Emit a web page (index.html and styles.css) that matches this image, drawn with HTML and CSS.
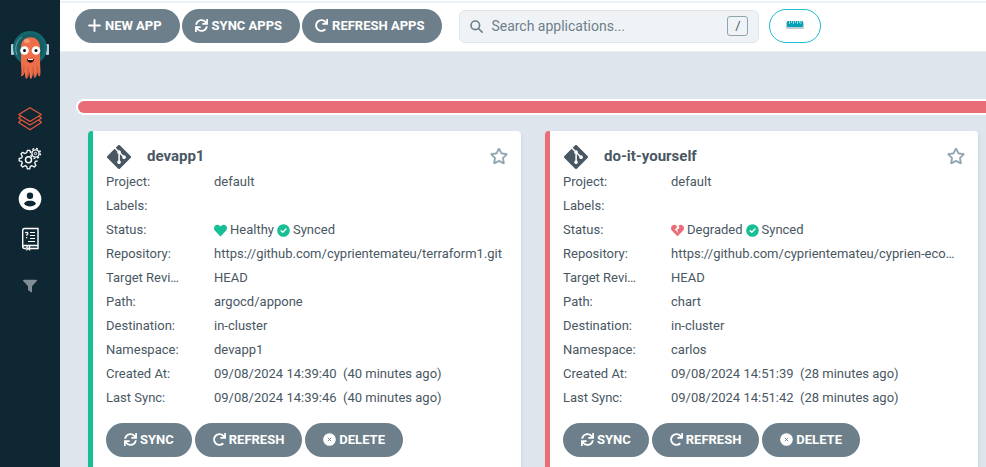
FILE: index.html
```html
<!DOCTYPE html>
<html lang="en">
<head>
<meta charset="utf-8">
<meta name="viewport" content="width=device-width, initial-scale=1">
<title>Applications</title>
<link rel="stylesheet" href="styles.css">
</head>
<body>
<svg class="sprite" aria-hidden="true">
  <symbol id="plus" viewBox="0 0 12 12"><path d="M6 1v10M1 6h10" fill="none" stroke="currentColor" stroke-width="1.8" stroke-linecap="round"/></symbol>
  <symbol id="sync" viewBox="0 0 512 512"><path d="M440.65 12.57l4 82.77A247.16 247.16 0 0 0 255.83 8C134.73 8 33.91 94.92 12.29 209.82A12 12 0 0 0 24.09 224h49.05a12 12 0 0 0 11.67-9.26 175.91 175.91 0 0 1 317-56.94l-101.46-4.86a12 12 0 0 0-12.57 12v47.41a12 12 0 0 0 12 12H500a12 12 0 0 0 12-12V12a12 12 0 0 0-12-12h-47.37a12 12 0 0 0-11.98 12.57zM255.83 432a175.61 175.61 0 0 1-146-77.8l101.8 4.87a12 12 0 0 0 12.57-12v-47.4a12 12 0 0 0-12-12H12a12 12 0 0 0-12 12V500a12 12 0 0 0 12 12h47.35a12 12 0 0 0 12-12.6l-4.15-82.57A247.17 247.17 0 0 0 255.83 504c121.11 0 221.93-86.92 243.55-201.82a12 12 0 0 0-11.8-14.18h-49.05a12 12 0 0 0-11.67 9.26A175.86 175.86 0 0 1 255.83 432z"/></symbol>
  <symbol id="redo" viewBox="0 0 512 512"><path d="M500.33 0h-47.41a12 12 0 0 0-12 12.57l4 82.76A247.42 247.42 0 0 0 256 8C119.34 8 7.9 119.53 8 256.19 8.1 393.07 119.1 504 256 504a247.1 247.1 0 0 0 166.18-63.91 12 12 0 0 0 .48-17.43l-34-34a12 12 0 0 0-16.38-.55A176 176 0 1 1 402.1 157.8l-101.53-4.87a12 12 0 0 0-12.57 12v47.41a12 12 0 0 0 12 12h200.33a12 12 0 0 0 12-12V12a12 12 0 0 0-12-12z"/></symbol>
  <symbol id="times" viewBox="0 0 14 14"><circle cx="7" cy="7" r="6.8"/><path d="M5.2 5.2l3.6 3.6M8.8 5.2L5.2 8.8" fill="none" stroke="#6d7f8b" stroke-width="1"/></symbol>
  <symbol id="check" viewBox="0 0 14 14"><circle cx="7" cy="7" r="6.8"/><path d="M4.4 7.2l1.8 1.8 3.5-3.6" fill="none" stroke="#fff" stroke-width="1.5" stroke-linecap="round" stroke-linejoin="round"/></symbol>
  <symbol id="heart" viewBox="0 0 512 512"><path d="M462.3 62.6C407.5 15.9 326 24.3 275.7 76.2L256 96.5l-19.7-20.3C186.1 24.3 104.5 15.9 49.7 62.6c-62.8 53.6-66.1 149.8-9.9 207.9l193.5 199.8c12.5 12.9 32.8 12.9 45.3 0l193.5-199.8c56.3-58.1 53-154.3-9.8-207.9z"/></symbol>
  <symbol id="broken" viewBox="0 0 512 512"><path d="M473.7 73.8l-2.4-2.5c-46-47-118-51.7-169.6-14.8L336 159.9l-96 64 48 128-144-144 96-64-28.6-86.5C159.7 19.6 87 24 40.7 71.4l-2.4 2.4C-10.4 123.6-12.5 202.9 31 256l212.1 218.6c7.1 7.3 18.6 7.3 25.7 0L481 255.9c43.5-53 41.4-132.3-7.3-182.1z"/></symbol>
  <symbol id="git" viewBox="0 32 448 448"><path d="M439.55 236.05L244 40.45a28.87 28.87 0 0 0-40.81 0l-40.66 40.63 51.52 51.52c27.06-9.14 52.68 16.77 43.39 43.68l49.66 49.66c34.23-11.8 61.18 31 35.47 56.69-26.49 26.49-70.21-2.87-56-37.34L240.22 199v121.85c25.3 12.54 22.26 41.85 9.08 55a34.34 34.34 0 0 1-48.55 0c-17.57-17.6-11.07-46.91 11.25-56v-123c-20.8-8.51-24.6-30.74-18.64-45L142.57 101 8.45 235.14a28.86 28.86 0 0 0 0 40.81l195.61 195.6a28.86 28.86 0 0 0 40.8 0l194.69-194.69a28.86 28.86 0 0 0 0-40.81z"/></symbol>
  <symbol id="star" viewBox="0 0 576 512"><path stroke="currentColor" stroke-width="12" d="M528.1 171.5L382 150.2 316.7 17.8c-11.7-23.6-45.6-23.9-57.4 0L194 150.2 47.9 171.5c-26.2 3.8-36.7 36.1-17.7 54.6l105.7 103-25 145.5c-4.5 26.3 23.2 46 46.4 33.7L288 439.6l130.7 68.7c23.2 12.2 50.9-7.4 46.4-33.7l-25-145.5 105.7-103c19-18.5 8.5-50.8-17.7-54.6zM388.6 312.3l23.7 138.4L288 385.4l-124.3 65.3 23.7-138.4-100.6-98 139-20.2 62.2-126 62.2 126 139 20.2-100.6 98z"/></symbol>
</svg>
<div class="layout">
  <nav class="sidebar" aria-label="Main">
    <a class="logo" href="#" aria-label="Home">
      <svg viewBox="0 0 38 50" width="38" height="50">
        <rect x="0" y="14" width="3" height="11" rx="1" fill="#b9cfdf"/><rect x="35" y="14" width="3" height="11" rx="1" fill="#b9cfdf"/>
        <circle cx="19" cy="18" r="17" fill="#12686f"/><circle cx="19" cy="18" r="14" fill="#175c63"/>
        <path d="M6 25C3 17 6 10 11 7" fill="none" stroke="#67a5a5" stroke-width="1"/>
        <path d="M10 17c0-13 19-13 19 0v14c0 6 1 11 0 15-2 1-2-2-3-4 0 3-1 5-2 6-2-1-1-4-2-6 0 3-1 6-2 7-2-1-1-5-2-7 0 3-1 6-3 7-1-2-1-5-1-7-1 2-2 5-4 4 1-4 0-9 0-13z" fill="#ee6e49"/>
        <path d="M13 36c0 5-1 8-3 9M17 37c0 5 0 8-1 11M22 37c0 5 1 8 2 10M26 36c0 4 1 7 3 9" stroke="#b9523c" stroke-width=".8" fill="none"/>
        <ellipse cx="16" cy="11" rx="3" ry="2" fill="#f69a78"/>
        <circle cx="13.500" cy="20.500" r="4.300" fill="#fff"/><circle cx="25" cy="20.500" r="4.300" fill="#fff"/>
        <circle cx="13.500" cy="20.500" r="1.500" fill="#111"/><circle cx="25" cy="20.500" r="1.500" fill="#111"/>
        <path d="M16 29h7c0 5-7 5-7 0z" fill="#2b1211"/><path d="M17 29h5v1h-5z" fill="#fff"/>
      </svg>
    </a>
    <a class="nav-link apps" href="#" aria-label="Applications">
      <svg viewBox="0 0 24 24" width="24" height="24" fill="none" stroke="currentColor" stroke-width="1.200" stroke-linejoin="round"><path d="M12 .8l11.300 6.700L12 14.500.7 7.500z"/><path d="M3 9L.7 11.200 12 18l11.300-6.800L21 9"/><path d="M3 13L.7 15.500 12 22.800l11.300-7.300L21 13"/></svg>
    </a>
    <a class="nav-link" href="#" aria-label="Settings">
      <svg viewBox="0 0 24 24" width="24" height="24" fill="none" stroke="currentColor"><path stroke-width="1.300" stroke-linejoin="round" d="M12.500 5.500l-.8-2.200H9.300l-.6 2.400-1.800.8L4.600 5.300 3 7l1.300 2.200-.7 1.700-2.400.6v2.300l2.400.6.7 1.700L3 18.300 4.700 20l2.200-1.300 1.800.7.6 2.500h2.400l.6-2.500 1.700-.7 2.300 1.300 1.600-1.700-1.200-2.200.7-1.700 2.300-.6"/><circle cx="10.500" cy="12.700" r="3" stroke-width="1.500"/><circle cx="17.500" cy="6.500" r="3.600" stroke-width="1.400"/><circle cx="17.500" cy="6.500" r="1.200"/><circle cx="17.500" cy="6.500" r="5" stroke-width="1.400" stroke-dasharray="1.900 2.020"/></svg>
    </a>
    <a class="nav-link" href="#" aria-label="User info">
      <svg viewBox="0 0 24 24" width="24" height="24"><circle cx="12" cy="12" r="11.300" fill="currentColor"/><circle cx="12" cy="8.800" r="3.200" fill="#0f2733"/><path d="M6 16.800c1-2.600 3.500-3 6-3s5 .4 6 3c-2.800 3.600-9.200 3.600-12 0z" fill="#0f2733"/></svg>
    </a>
    <a class="nav-link" href="#" aria-label="Documentation">
      <svg viewBox="0 0 24 24" width="24" height="24" fill="none" stroke="currentColor" stroke-width="1.400"><path d="M20 18.500V1.500H6.500C5 1.500 4.700 2.300 4.700 3.500v16c0 1.300.7 2 2 2H8M12 21.500h8v-3H6.500c-1.300 0-1.800.6-1.800 1.500"/><path d="M9 18.500v4l1.200-1 1.300 1v-4"/><path stroke-width="1.200" d="M7.500 6.300c.5-1.400 2.700-1 2.300.5-.2.700-1.200.9-1.200 2M8.600 10v1.300M12 5.500h5M12 8.500h5M12 11.500h5M10 14.500h7"/></svg>
    </a>
    <button class="filter" type="button" aria-label="Filters">
      <svg viewBox="0 0 14 14" width="14" height="14"><path d="M.7.700h12.600c.7 0 .9.700.5 1.200L9 7.200v5.600c0 .6-.5.800-1 .5l-2.600-2c-.3-.2-.4-.5-.4-.8V7.200L.2 1.900C-.2 1.400 0 .7.700.7z" fill="currentColor"/></svg>
    </button>
  </nav>
  <div class="page">
    <header class="topbar">
      <div class="actions">
        <button class="btn btn-top" type="button"><svg class="icon"><use href="#plus"/></svg>NEW APP</button>
        <button class="btn btn-top" type="button"><svg class="icon"><use href="#sync"/></svg>SYNC APPS</button>
        <button class="btn btn-top" type="button"><svg class="icon"><use href="#redo"/></svg>REFRESH APPS</button>
      </div>
      <label class="search">
        <svg viewBox="0 0 13 13" width="13" height="13" fill="none" stroke="currentColor" stroke-width="1.600" stroke-linecap="round"><circle cx="5.300" cy="5.300" r="4.300"/><path d="M8.500 8.500l3.600 3.600"/></svg>
        <input type="text" placeholder="Search applications..." aria-label="Search applications">
        <kbd>/</kbd>
      </label>
      <button class="ruler" type="button" aria-label="Compact view">
        <svg viewBox="0 0 18 8" width="18" height="8"><rect x="0" y="1" width="18" height="7" rx="1" fill="#c2ccd3"/><rect x="1" y="0" width="16" height="6" rx="1" fill="#00a2b7"/><path d="M3.500 0v3M5.500 0v2M7.500 0v3M9.500 0v2M11.500 0v3M13.500 0v2M15 0v3" stroke="#bfe4ea" stroke-width=".8"/></svg>
      </button>
    </header>
    <main class="content">
      <div class="health-bar" role="img" aria-label="Application health"></div>
      <div class="cards">
        <article class="card healthy">
          <header class="card-head"><svg class="git"><use href="#git"/></svg><h2>devapp1</h2><button class="fav" type="button" aria-label="Favorite"><svg><use href="#star"/></svg></button></header>
          <dl>
            <dt>Project:</dt><dd>default</dd>
            <dt>Labels:</dt><dd></dd>
            <dt>Status:</dt><dd class="status"><svg class="good"><use href="#heart"/></svg><span>Healthy</span><svg class="good"><use href="#check"/></svg><span>Synced</span></dd>
            <dt>Repository:</dt><dd>https://github.com/cyprientemateu/terraform1.git</dd>
            <dt>Target Revision:</dt><dd>HEAD</dd>
            <dt>Path:</dt><dd>argocd/appone</dd>
            <dt>Destination:</dt><dd>in-cluster</dd>
            <dt>Namespace:</dt><dd>devapp1</dd>
            <dt>Created At:</dt><dd>09/08/2024 14:39:40 &nbsp;(40 minutes ago)</dd>
            <dt>Last Sync:</dt><dd>09/08/2024 14:39:46 &nbsp;(40 minutes ago)</dd>
          </dl>
          <div class="card-actions">
            <button class="btn" type="button"><svg class="icon"><use href="#sync"/></svg>SYNC</button>
            <button class="btn" type="button"><svg class="icon"><use href="#redo"/></svg>REFRESH</button>
            <button class="btn" type="button"><svg class="icon"><use href="#times"/></svg>DELETE</button>
          </div>
        </article>
        <article class="card degraded">
          <header class="card-head"><svg class="git"><use href="#git"/></svg><h2>do-it-yourself</h2><button class="fav" type="button" aria-label="Favorite"><svg><use href="#star"/></svg></button></header>
          <dl>
            <dt>Project:</dt><dd>default</dd>
            <dt>Labels:</dt><dd></dd>
            <dt>Status:</dt><dd class="status"><svg class="bad"><use href="#broken"/></svg><span>Degraded</span><svg class="good"><use href="#check"/></svg><span>Synced</span></dd>
            <dt>Repository:</dt><dd>https://github.com/cyprientemateu/cyprien-eco…</dd>
            <dt>Target Revision:</dt><dd>HEAD</dd>
            <dt>Path:</dt><dd>chart</dd>
            <dt>Destination:</dt><dd>in-cluster</dd>
            <dt>Namespace:</dt><dd>carlos</dd>
            <dt>Created At:</dt><dd>09/08/2024 14:51:39 &nbsp;(28 minutes ago)</dd>
            <dt>Last Sync:</dt><dd>09/08/2024 14:51:42 &nbsp;(28 minutes ago)</dd>
          </dl>
          <div class="card-actions">
            <button class="btn" type="button"><svg class="icon"><use href="#sync"/></svg>SYNC</button>
            <button class="btn" type="button"><svg class="icon"><use href="#redo"/></svg>REFRESH</button>
            <button class="btn" type="button"><svg class="icon"><use href="#times"/></svg>DELETE</button>
          </div>
        </article>
      </div>
    </main>
  </div>
</div>
</body>
</html>
```
FILE: styles.css
```css
* { box-sizing: border-box; }
body { margin: 0; font-family: Roboto, "Liberation Sans", sans-serif; font-size: 13px; color: #495763; background: #dee5ec; }
button, input, kbd { font: inherit; }
button { cursor: pointer; }
svg { display: block; flex: none; fill: currentColor; }
svg[fill="none"] { fill: none; }
.sprite { position: absolute; width: 0; height: 0; }
.layout { display: flex; height: 100vh; overflow: hidden; }

.sidebar { display: flex; flex-direction: column; align-items: center; flex: none; width: 60px; padding-top: 30px; background: #0f2733; }
.logo { margin-bottom: 27px; }
.nav-link { margin-bottom: 16px; color: #fff; }
.nav-link.apps { color: #e9573a; }
.filter { margin-top: 12px; padding: 0; border: 0; background: none; color: #818d94; }

.page { display: flex; flex: 1; flex-direction: column; min-width: 0; }
.topbar { display: flex; align-items: center; flex: none; height: 52px; padding: 0 15px; border-top: 1px solid #fff; border-bottom: 1px solid #e9eef2; background: #fff; box-shadow: inset 0 2px #edf2f6; }
.actions { display: flex; gap: 2px; margin-right: 17px; }
.btn { display: flex; align-items: center; gap: 3px; height: 34px; padding: 0 18px 2px; border: 0; border-radius: 17px; background: #6d7f8b; color: #fff; font-weight: 700; white-space: nowrap; }
.icon { width: 13px; height: 13px; }
.btn-top { gap: 4px; padding: 0 18px 2px 13px; }
.search { display: flex; align-items: center; flex: 0 1 300px; gap: 8px; height: 33px; padding: 0 10px; border: 1px solid #dee6ec; border-radius: 6px; background: #eff3f6; color: #6d7f8b; }
.search input { flex: 1; min-width: 0; padding: 0; border: 0; outline: 0; background: none; font-size: 14px; color: #495763; }
.search input::placeholder { color: #6d7f8b; opacity: 1; }
kbd { width: 21px; height: 20px; border: 1px solid #8fa4b1; border-radius: 3px; line-height: 18px; text-align: center; color: #495763; }
.ruler { display: grid; place-items: center; width: 52px; height: 34px; margin-left: 10px; padding: 0 0 2px; border: 1px solid #1fbdd0; border-radius: 17px; background: #fff; }

.content { display: flex; flex: 1; flex-direction: column; gap: 16px; min-height: 0; padding: 47px 0 0 16px; overflow: hidden; }
.health-bar { flex: none; height: 16px; border: solid #fff; border-width: 2px 0 2px 2px; border-radius: 8px 0 0 8px; background: #e96d76; }
.cards { display: grid; flex: 1; grid-template-columns: repeat(2, minmax(0, 1fr)); gap: 24px; padding: 0 8px 0 12px; }
.card { padding: 13px 13px 10px; border-left: 5px solid; border-radius: 4px 4px 0 0; background: #fff; box-shadow: 1px 2px 3px #cbd5de; }
.healthy { border-color: #18be94; }
.degraded { border-color: #e96d76; }
.card-head { display: flex; align-items: center; height: 26px; }
.git { width: 24px; height: 24px; margin-left: 1px; }
h2 { flex: 1; margin: 0 0 0 16px; padding-bottom: 2px; font-size: 15px; font-weight: 700; }
.fav { padding: 0 0 3px; border: 0; background: none; color: #8fa4b1; }
.fav svg { width: 18px; height: 16px; }
dl { display: grid; grid-template-columns: 108px minmax(0, 1fr); grid-auto-rows: 24px; margin: 0; line-height: 24px; }
dt, dd { margin: 0; overflow: hidden; text-overflow: ellipsis; white-space: nowrap; }
dt { padding-right: 32px; }
.status { display: flex; align-items: center; gap: 3px; }
.status svg { width: 13px; height: 13px; }
.good { color: #18be94; }
.bad { color: #e96d76; }
.card-actions { display: flex; gap: 3px; margin-top: 13px; }
```
